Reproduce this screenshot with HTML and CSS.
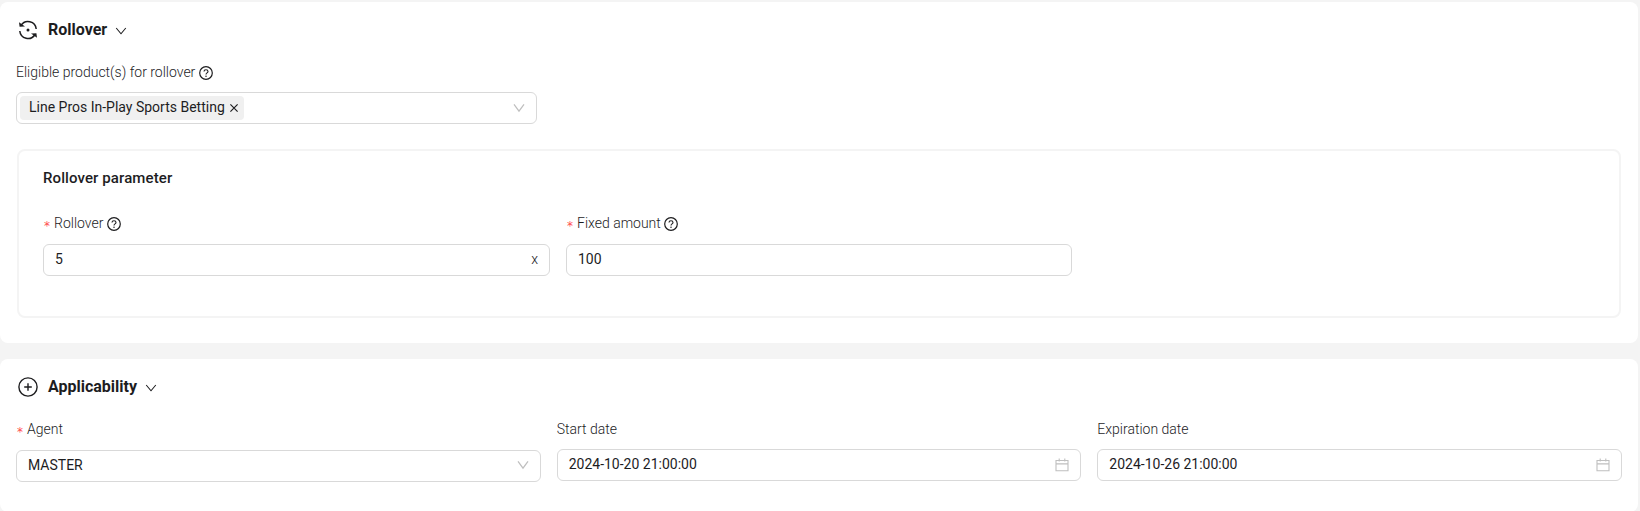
FILE: index.html
```html
<!DOCTYPE html>
<html lang="en">
<head>
<meta charset="utf-8">
<title>Rollover</title>
<link rel="stylesheet" href="styles.css">
</head>
<body>
<svg class="defs" width="0" height="0">
  <symbol id="help" viewBox="0 0 14 14"><circle cx="7" cy="7" r="6.3" fill="none" stroke="currentColor" stroke-width="1.2"/><path d="M5 5.500C5 4.300 5.800 3.700 7 3.700s2 .7 2 1.700c0 1.500-2 1.400-2 3" fill="none" stroke="currentColor" stroke-width="1.100"/><circle cx="7" cy="10.200" r=".75" fill="currentColor"/></symbol>
  <symbol id="down" viewBox="0 0 12 10"><path d="M1 1.300L6 8.200l5-6.900" fill="none" stroke="currentColor" stroke-width="1.250"/></symbol>
  <symbol id="toggle" viewBox="0 0 12 8"><path d="M1.200 1L6 6.800 10.800 1" fill="none" stroke="currentColor" stroke-width="1.050"/></symbol>
  <symbol id="calendar" viewBox="0 0 14 14"><path d="M1 2.500h12v10.300H1zM1 5.900h12M4.200.6v3M9.800.6v3" fill="none" stroke="currentColor" stroke-width="1.100"/></symbol>
</svg>
<section class="card">
  <header class="card-head">
    <svg class="head-icon" viewBox="0 0 20 20" fill="none" stroke="currentColor" stroke-width="1.500"><path d="M3 5.500A8.200 8.200 0 0 1 18.200 9M17 14.500A8.200 8.200 0 0 1 1.800 11"/><path d="M1 2.200l.6 4.600 5.400-.4zM19 17.800l-.6-4.600-5.400.4z" fill="currentColor" stroke="none"/><circle cx="10" cy="10" r="1.500" fill="currentColor" stroke="none"/></svg>
    <h2>Rollover</h2>
    <svg class="toggle"><use href="#toggle"/></svg>
  </header>
  <div class="label">Eligible product(s) for rollover<svg class="help"><use href="#help"/></svg></div>
  <div class="field products">
    <span class="tag">Line Pros In-Play Sports Betting<svg class="close" viewBox="0 0 8 8"><path d="M.4.4l7.200 7.200M7.600.4L.4 7.600" stroke="currentColor" stroke-width="1.150"/></svg></span>
    <svg class="arrow"><use href="#down"/></svg>
  </div>
  <div class="panel">
    <h3>Rollover parameter</h3>
    <div class="panel-body">
      <div class="params">
        <div>
          <div class="label"><i class="req">*</i>Rollover<svg class="help"><use href="#help"/></svg></div>
          <div class="field">5<span class="suffix">x</span></div>
        </div>
        <div>
          <div class="label"><i class="req">*</i>Fixed amount<svg class="help fixed-help"><use href="#help"/></svg></div>
          <div class="field">100</div>
        </div>
      </div>
    </div>
  </div>
</section>
<section class="card applicability">
  <header class="card-head">
    <svg class="head-icon" viewBox="0 0 20 20" fill="none" stroke="currentColor" stroke-width="1.400"><circle cx="10" cy="10" r="9.100"/><path d="M6.200 10h7.600M10 6.200v7.600"/></svg>
    <h2>Applicability</h2>
    <svg class="toggle"><use href="#toggle"/></svg>
  </header>
  <div class="dates">
    <div>
      <div class="label"><i class="req">*</i>Agent</div>
      <div class="field agent">MASTER<svg class="arrow"><use href="#down"/></svg></div>
    </div>
    <div>
      <div class="label">Start date</div>
      <div class="field">2024-10-20 21:00:00<svg class="calendar"><use href="#calendar"/></svg></div>
    </div>
    <div>
      <div class="label">Expiration date</div>
      <div class="field">2024-10-26 21:00:00<svg class="calendar"><use href="#calendar"/></svg></div>
    </div>
  </div>
</section>
</body>
</html>
```
FILE: styles.css
```css
* { box-sizing: border-box; }
html { overflow: hidden; background: #f4f4f4; }
body { margin: 0; padding: 2px 2px 0 0; font: 400 14px/22px Roboto, sans-serif; color: #1d1d1f; }
.defs { display: block; }
svg { flex: none; }
.card { height: 341px; padding: 0 16px; background: #fff; border-radius: 8px; }
.applicability { height: 153px; margin-top: 16px; }
.card-head { display: flex; align-items: center; height: 56px; padding-left: 2px; }
.head-icon { width: 20px; height: 20px; margin-right: 10px; }
h2 { margin: 0; font-size: 16px; font-weight: 700; line-height: 24px; }
.toggle { width: 12px; height: 8px; margin: 2px 0 0 8px; }
.label { display: flex; align-items: center; height: 22px; margin-top: 3px; margin-bottom: 9px; font-weight: 300; white-space: pre; }
.help { width: 14px; height: 14px; margin: 2px 0 0 4px; }
.fixed-help { margin-left: 3px; }
.req { width: 11px; padding: 5px 0 0 1px; color: #ff4d4f; font: 400 12px/22px "DejaVu Sans", sans-serif; }
.field { display: flex; align-items: center; height: 32px; padding: 0 11px 2px; border: 1px solid #d9d9d9; border-radius: 6px; }
.products { width: 521px; padding: 0 11px 0 3px; }
.tag { display: flex; align-items: center; height: 24px; padding: 0 6px 2px 9px; background: #f0f0f0; border-radius: 4px; }
.close { width: 8px; height: 8px; margin: 2px 0 0 5px; }
.arrow { width: 12px; height: 10px; margin-left: auto; color: #bfbfbf; }
.calendar { width: 14px; height: 14px; margin: 2px 0 0 auto; color: #bfbfbf; }
.suffix { margin-left: auto; font-weight: 300; }
.panel { height: 169px; margin: 25px 1px 0; border: 2px solid #f4f4f4; border-radius: 8px; }
h3 { height: 22px; margin: 16px 24px 0; font-size: 15px; font-weight: 500; line-height: 22px; letter-spacing: .1px; }
.panel-body { padding: 23px 24px 0; }
.params { display: grid; grid-template-columns: 507px 506px; gap: 16px; }
.params .label { margin-top: 0; margin-bottom: 10px; }
.dates { display: grid; grid-template-columns: repeat(3, 1fr); gap: 16px; }
.agent { margin-top: 10px; }
```
